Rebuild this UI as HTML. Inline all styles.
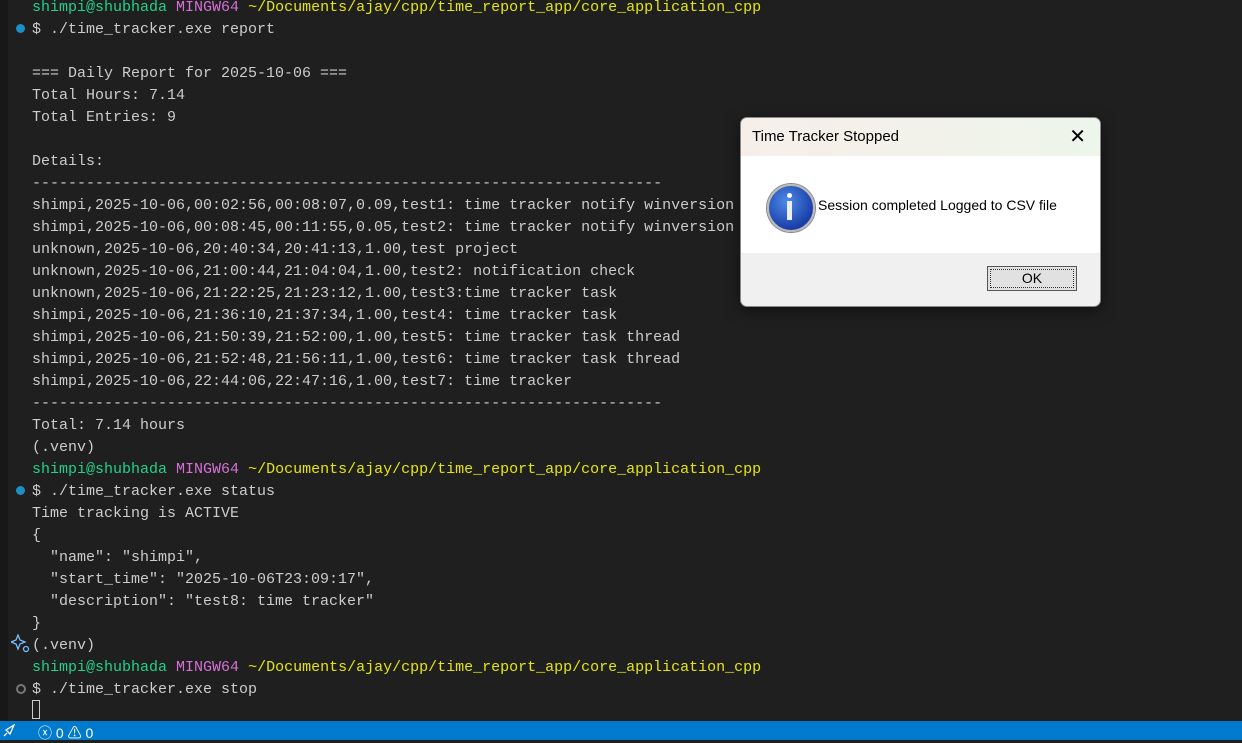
<!DOCTYPE html>
<html><head><style>
body{margin:0;width:1242px;height:740px;background:#1f1f1f;overflow:hidden;position:relative;font-family:"Liberation Mono",monospace;}
.gut{position:absolute;left:0;top:0;width:8px;height:721px;background:#181818;}
.term{position:absolute;left:32px;top:-3px;font-size:15px;line-height:22px;color:#cccccc;white-space:pre;}
.g{color:#23d18b}.m{color:#d670d6}.y{color:#e5e510}
.dot{position:absolute;left:16px;width:9px;height:9px;border-radius:50%;}
.sb{position:absolute;left:0;top:721px;width:1242px;height:19px;background:#007acc;color:#fff;font:14px "Liberation Sans",sans-serif;}
.dlg{position:absolute;left:740px;top:117px;width:359px;height:188px;border:1px solid #888;border-radius:7px;overflow:hidden;background:#f0f0f0;font-family:"Liberation Sans",sans-serif;box-shadow:0 4px 14px rgba(0,0,0,.5);}
.tb{height:38px;background:linear-gradient(90deg,#f6efe9,#eef5ea);font-size:15px;color:#000;line-height:38px;padding-left:11px;position:relative;}
.bd{height:97px;background:#fff;position:relative;}
.ok{position:absolute;left:246px;top:148px;width:90px;height:25px;border:1px solid #555;background:#e1e1e1;box-sizing:border-box;text-align:center;font-size:14px;line-height:22px;}
.ok span{position:absolute;inset:2px;border:1px dotted #333;}
</style></head><body>
<div class="gut"></div>
<div class="dot" style="top:24px;background:#1c8fc4"></div>
<div class="dot" style="top:486px;background:#1c8fc4"></div>
<div class="dot" style="top:684px;border:2px solid #777;width:6px;height:6px"></div>
<svg style="position:absolute;left:11px;top:634px" width="20" height="20" viewBox="0 0 20 20"><path d="M7 1 L9 6 L14 8 L9 10 L7 15 L5 10 L0 8 L5 6 Z" fill="none" stroke="#75beff" stroke-width="1.3"/><circle cx="15" cy="15" r="2.5" fill="none" stroke="#75beff" stroke-width="1.3"/></svg>
<div class="term"><span class="g">shimpi@shubhada</span> <span class="m">MINGW64</span> <span class="y">~/Documents/ajay/cpp/time_report_app/core_application_cpp</span>
$ ./time_tracker.exe report

=== Daily Report for 2025-10-06 ===
Total Hours: 7.14
Total Entries: 9

Details:
----------------------------------------------------------------------
shimpi,2025-10-06,00:02:56,00:08:07,0.09,test1: time tracker notify winversion
shimpi,2025-10-06,00:08:45,00:11:55,0.05,test2: time tracker notify winversion
unknown,2025-10-06,20:40:34,20:41:13,1.00,test project
unknown,2025-10-06,21:00:44,21:04:04,1.00,test2: notification check
unknown,2025-10-06,21:22:25,21:23:12,1.00,test3:time tracker task
shimpi,2025-10-06,21:36:10,21:37:34,1.00,test4: time tracker task
shimpi,2025-10-06,21:50:39,21:52:00,1.00,test5: time tracker task thread
shimpi,2025-10-06,21:52:48,21:56:11,1.00,test6: time tracker task thread
shimpi,2025-10-06,22:44:06,22:47:16,1.00,test7: time tracker
----------------------------------------------------------------------
Total: 7.14 hours
(.venv)
<span class="g">shimpi@shubhada</span> <span class="m">MINGW64</span> <span class="y">~/Documents/ajay/cpp/time_report_app/core_application_cpp</span>
$ ./time_tracker.exe status
Time tracking is ACTIVE
{
  "name": "shimpi",
  "start_time": "2025-10-06T23:09:17",
  "description": "test8: time tracker"
}
(.venv)
<span class="g">shimpi@shubhada</span> <span class="m">MINGW64</span> <span class="y">~/Documents/ajay/cpp/time_report_app/core_application_cpp</span>
$ ./time_tracker.exe stop
</div>
<div style="position:absolute;left:32px;top:700px;width:8px;height:19px;border:1px solid #ccc;box-sizing:border-box"></div>
<div class="sb"><svg style="position:absolute;left:2px;top:3px" width="14" height="14" viewBox="0 0 14 14"><path d="M2 12 L5 9 M4 6 L12 1 L8 10 Z" fill="none" stroke="#fff" stroke-width="1.3"/></svg>
<span style="position:absolute;left:38px;top:2px">ⓧ 0 ⚠ 0</span></div>
<div class="dlg">
<div class="tb">Time Tracker Stopped<span style="position:absolute;right:14px;top:0;font-size:20px">✕</span></div>
<div class="bd">
<div style="position:absolute;left:26px;top:28px;width:44px;height:44px;border-radius:50%;background:radial-gradient(circle at 40% 35%,#4e8ae8,#1a3fa8 70%);border:2px solid #bbb;box-shadow:0 0 0 1px #888"></div>
<div style="position:absolute;left:46px;top:37px;width:5px;height:5px;border-radius:50%;background:#fff"></div>
<div style="position:absolute;left:46px;top:45px;width:5px;height:19px;background:#eee"></div>
<div style="position:absolute;left:77px;top:41px;font-size:14px;color:#000">Session completed Logged to CSV file</div>
</div>
<div class="ok"><span></span>OK</div>
</div>
</body></html>
